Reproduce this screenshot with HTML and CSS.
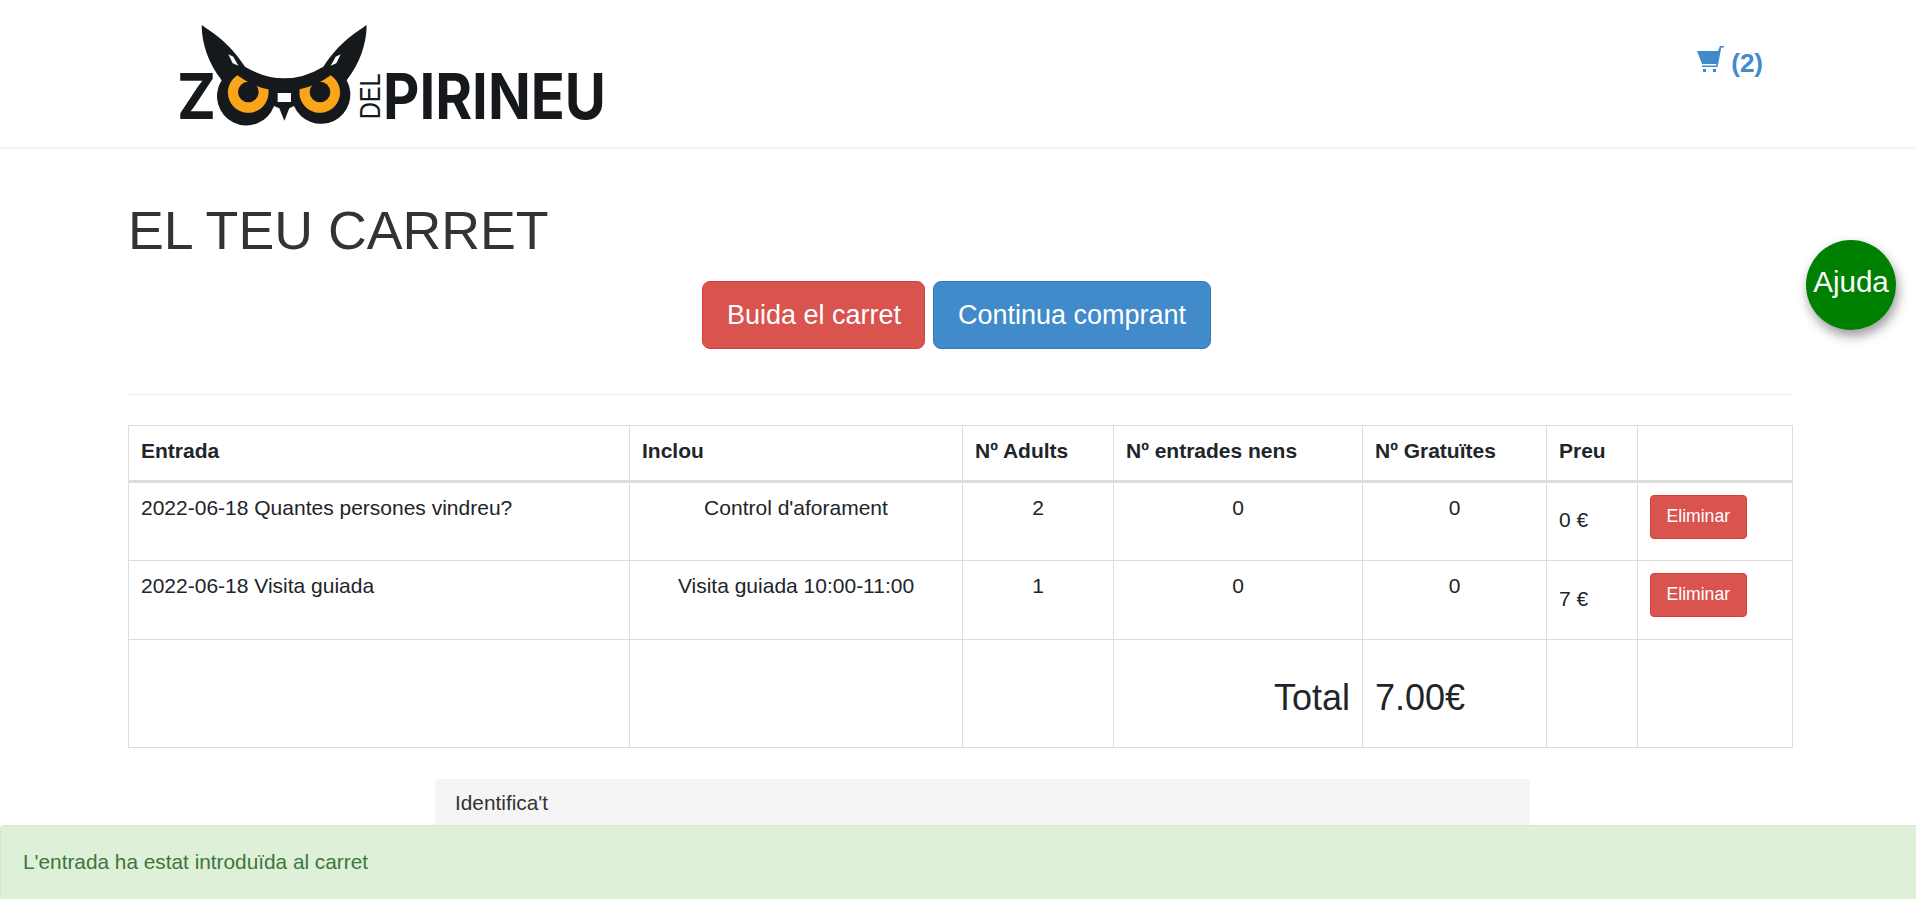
FILE: index.html
```html
<!DOCTYPE html>
<html lang="ca">
<head>
    <meta charset="UTF-8">
    <title>El teu carret - Zoo del Pirineu</title>
    <link rel="stylesheet" href="styles.css">
</head>
<body>

<div class="navbar">
    <a class="logo" href="#">
        <svg width="480" height="150" viewBox="0 0 480 150">
            <g transform="scale(0.33333)">
                <path class="ink" d="M155 75 C190 100 235 125 285 200 Q403 270 520 200 C570 125 615 100 650 75 C650 130 630 190 590 241 A88 88 0 1 1 432 318 L418 325 L403 362 L388 325 L372 318 A88 88 0 1 1 215 241 C175 190 155 130 155 75 Z"/>
                <path class="hole" d="M235 163 L250 170 L265 197 L248 190 Z"/>
                <path class="hole" d="M572 163 L557 170 L542 197 L559 190 Z"/>
                <path class="iris" d="M262 226 Q305 258 355 268 A61 61 0 1 1 262 226 Z"/>
                <path class="iris" d="M542 226 Q499 258 449 268 A61 61 0 1 0 542 226 Z"/>
                <circle class="ink" cx="295" cy="276" r="31"/>
                <circle class="ink" cx="510" cy="276" r="31"/>
                <rect class="hole" x="383" y="279" width="40" height="27"/>
            </g>
            <text class="logo-big" x="27" y="119.3" textLength="39" lengthAdjust="spacingAndGlyphs">Z</text>
            <text class="logo-del" transform="translate(230 119.3) rotate(-90)" textLength="46" lengthAdjust="spacingAndGlyphs">DEL</text>
            <text class="logo-big" x="233" y="119.3" textLength="223" lengthAdjust="spacingAndGlyphs">PIRINEU</text>
        </svg>
    </a>
    <a class="cart-link" href="#">
        <svg class="cart-icon" width="27" height="27" viewBox="0 0 27 27">
            <path d="M0 5 H22 L20 18 H5 Z"/>
            <path d="M21 5 L23 0 H27 V1.5 H24.3 L20.6 21 H5 V19.5 H19.3 Z"/>
            <rect x="6" y="23" width="3" height="3"/>
            <rect x="16" y="23" width="3" height="3"/>
        </svg>
        (2)
    </a>
</div>

<div class="container">
    <h1>EL TEU CARRET</h1>
    <div class="actions">
        <a class="btn btn-lg btn-danger" href="#">Buida el carret</a>
        <a class="btn btn-lg btn-primary" href="#">Continua comprant</a>
    </div>
    <hr>

    <table class="cart-table">
        <colgroup>
            <col class="col-a"><col class="col-b"><col class="col-c"><col class="col-d"><col class="col-e"><col class="col-f"><col class="col-g">
        </colgroup>
        <thead>
            <tr>
                <th>Entrada</th>
                <th>Inclou</th>
                <th>Nº Adults</th>
                <th>Nº entrades nens</th>
                <th>Nº Gratuïtes</th>
                <th>Preu</th>
                <th></th>
            </tr>
        </thead>
        <tbody>
            <tr>
                <td>2022-06-18 Quantes persones vindreu?</td>
                <td class="center">Control d'aforament</td>
                <td class="center">2</td>
                <td class="center">0</td>
                <td class="center">0</td>
                <td class="price">0 €</td>
                <td class="btn-cell"><a class="btn btn-danger" href="#">Eliminar</a></td>
            </tr>
            <tr>
                <td>2022-06-18 Visita guiada</td>
                <td class="center">Visita guiada 10:00-11:00</td>
                <td class="center">1</td>
                <td class="center">0</td>
                <td class="center">0</td>
                <td class="price">7 €</td>
                <td class="btn-cell"><a class="btn btn-danger" href="#">Eliminar</a></td>
            </tr>
            <tr class="total-row">
                <td></td>
                <td></td>
                <td></td>
                <td class="total-label">Total</td>
                <td>7.00€</td>
                <td></td>
                <td></td>
            </tr>
        </tbody>
    </table>

    <div class="panel">
        <div class="panel-heading">Identifica't</div>
    </div>
</div>

<a class="help" href="#">Ajuda</a>

<div class="alert">L'entrada ha estat introduïda al carret</div>

</body>
</html>
```

FILE: styles.css
```css
html, body {
    height: 100%;
}
body {
    margin: 0;
    height: 899px;
    overflow: hidden;
    position: relative;
    background-color: #fff;
    font-family: "Liberation Sans", Arial, sans-serif;
    font-size: 21px;
    line-height: 1.42857;
    color: #212529;
}
a {
    text-decoration: none;
}
.navbar {
    display: flex;
    justify-content: space-between;
    height: 147px;
    box-shadow: 0 1px 4px rgba(0, 0, 0, 0.08);
}
.logo {
    margin-left: 150px;
    height: 150px;
}
.logo svg {
    overflow: visible;
}
.cart-link {
    display: flex;
    align-items: flex-start;
    gap: 7px;
    margin-right: 153px;
    padding-top: 45px;
    font-size: 26px;
    line-height: 36px;
    font-weight: bold;
    color: #428bca;
}
.cart-icon {
    fill: #428bca;
    margin-top: 1px;
}
.ink { fill: #15191c; }
.hole { fill: #fff; }
.iris { fill: #f9a51a; }
.logo-big {
    font-family: Inter, "Liberation Sans", sans-serif;
    font-weight: bold;
    font-size: 63.3px;
    fill: #15191c;
}
.logo-del {
    font-family: "Liberation Sans", sans-serif;
    font-size: 30px;
    fill: #15191c;
}
.container {
    margin: 0 123px 0 128px;
}
h1 {
    margin: 54px 0 21px;
    font-size: 53.7px;
    font-weight: normal;
    line-height: 1.1;
    color: #333;
}
.actions {
    display: flex;
    justify-content: center;
    gap: 8px;
    padding-right: 8px;
}
.btn {
    display: inline-block;
    padding: 8.5px 15.5px;
    font-size: 17.6px;
    line-height: 1.42857;
    color: #fff;
    border: 1px solid transparent;
    border-radius: 4px;
}
.btn-lg {
    padding: 13.5px 23.5px;
    font-size: 27px;
    line-height: 1.42857;
    border-radius: 8px;
}
.btn-danger {
    background-color: #d9534f;
    border-color: #d43f3a;
}
.btn-primary {
    background-color: #428bca;
    border-color: #357ebd;
}
hr {
    margin: 45px 0 30px;
    border: 0;
    border-top: 1px solid #eee;
}
.cart-table {
    width: 100%;
    table-layout: fixed;
    border-collapse: collapse;
}
.col-a { width: 501px; }
.col-b { width: 333px; }
.col-c { width: 151px; }
.col-d { width: 249px; }
.col-e { width: 184px; }
.col-f { width: 91px; }
.cart-table th,
.cart-table td {
    border: 1px solid #ddd;
    padding: 10px 12px 12px;
    text-align: left;
    vertical-align: top;
}
.cart-table th {
    height: 56px;
    padding: 10px 12px;
    border-bottom-width: 3px;
    box-sizing: border-box;
    font-weight: bold;
}
.cart-table td.center {
    text-align: center;
}
.cart-table td.price {
    vertical-align: middle;
}
.cart-table td.btn-cell {
    padding-top: 12px;
}
.cart-table tbody tr {
    height: 79px;
}
.cart-table .total-row td {
    height: 108px;
    box-sizing: border-box;
    padding: 22px 12px 12px;
    vertical-align: middle;
    font-size: 36px;
}
.cart-table td.total-label {
    text-align: right;
}
.panel {
    width: 1095px;
    margin: 31px 0 0 307px;
    background-color: #f5f5f5;
    border-radius: 4px;
}
.panel-heading {
    padding: 9px 20px;
    height: 60px;
    font-size: 20.8px;
    color: #333;
}
.help {
    position: absolute;
    top: 240px;
    left: 1806px;
    width: 90px;
    height: 90px;
    box-sizing: border-box;
    padding-bottom: 6px;
    display: flex;
    align-items: center;
    justify-content: center;
    border-radius: 50%;
    background-color: green;
    color: #fff;
    font-size: 29.6px;
    box-shadow: 2px 6px 12px rgba(0, 0, 0, 0.4);
}
.alert {
    position: absolute;
    left: 0;
    right: -10px;
    bottom: -6px;
    height: 80px;
    box-sizing: border-box;
    padding: 21px 22px;
    font-size: 20.8px;
    background-color: #dff0d8;
    border: 1px solid #d6e9c6;
    border-radius: 4px;
    color: #3c763d;
}
```
